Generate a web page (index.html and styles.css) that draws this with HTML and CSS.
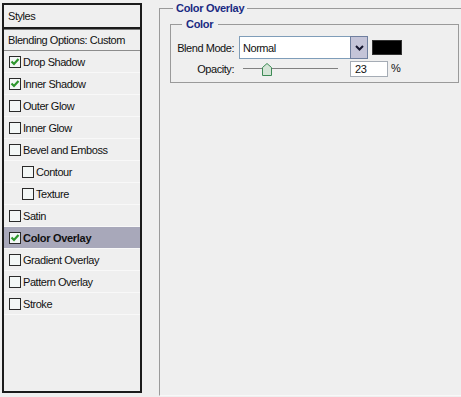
FILE: index.html
```html
<!DOCTYPE html>
<html lang="en">
<head>
    <meta charset="UTF-8">
    <title>Layer Style</title>
    <link rel="stylesheet" href="styles.css">
</head>
<body>

<div class="dialog">
    <!-- 左側樣式清單 -->
    <div class="style-list">
        <div class="list-head">Styles</div>
        <div class="list-blend">Blending Options: Custom</div>
        <div class="list-item"><span class="check"><svg width="10" height="10" viewBox="0 0 10 10"><path d="M1.5 4.5 L4 7 L8.5 2" fill="none" stroke="#2c962c" stroke-width="2.2"/></svg></span>Drop Shadow</div>
        <div class="list-item"><span class="check"><svg width="10" height="10" viewBox="0 0 10 10"><path d="M1.5 4.5 L4 7 L8.5 2" fill="none" stroke="#2c962c" stroke-width="2.2"/></svg></span>Inner Shadow</div>
        <div class="list-item"><span class="check"></span>Outer Glow</div>
        <div class="list-item"><span class="check"></span>Inner Glow</div>
        <div class="list-item"><span class="check"></span>Bevel and Emboss</div>
        <div class="list-item sub"><span class="check"></span>Contour</div>
        <div class="list-item sub"><span class="check"></span>Texture</div>
        <div class="list-item"><span class="check"></span>Satin</div>
        <div class="list-item active"><span class="check"><svg width="10" height="10" viewBox="0 0 10 10"><path d="M1.5 4.5 L4 7 L8.5 2" fill="none" stroke="#2c962c" stroke-width="2.2"/></svg></span>Color Overlay</div>
        <div class="list-item"><span class="check"></span>Gradient Overlay</div>
        <div class="list-item"><span class="check"></span>Pattern Overlay</div>
        <div class="list-item"><span class="check"></span>Stroke</div>
    </div>

    <!-- 右側設定 -->
    <fieldset class="group">
        <legend>Color Overlay</legend>
        <fieldset class="group-inner">
            <legend>Color</legend>
            <div class="field-row">
                <label class="field-label">Blend Mode:</label>
                <div class="select">
                    <span class="select-value">Normal</span>
                    <span class="select-btn"><svg width="9" height="6" viewBox="0 0 9 6"><path d="M1 1 L4.5 4.5 L8 1" fill="none" stroke="#15152e" stroke-width="2"/></svg></span>
                </div>
                <span class="swatch"></span>
            </div>
            <div class="field-row row-opacity">
                <label class="field-label">Opacity:</label>
                <div class="slider">
                    <div class="slider-track"></div>
                    <svg class="slider-thumb" style="left: 23%;" width="10" height="13" viewBox="0 0 10 13"><polygon points="5,0.5 9.5,4.5 9.5,12.5 0.5,12.5 0.5,4.5" fill="#d4e4d6" stroke="#3d8a55"/></svg>
                </div>
                <span class="num-input">23</span>
                <span class="unit">%</span>
            </div>
        </fieldset>
    </fieldset>
</div>

</body>
</html>
```

FILE: styles.css
```css
body {
    margin: 0;
    width: 461px;
    height: 397px;
    overflow: hidden;
    background-color: #efefef;
    font-family: "Liberation Sans", Arial, sans-serif;
    font-size: 11px;
    letter-spacing: -0.45px;
    color: #111;
}
.dialog {
    display: flex;
    align-items: flex-start;
    padding: 2px 0 0 2px;
    height: 397px;
    box-sizing: border-box;
}
.style-list {
    width: 140px;
    height: 390px;
    margin-top: 1px;
    box-sizing: border-box;
    border: 2px solid #1b1b1b;
    flex-shrink: 0;
}
.list-head {
    height: 22px;
    line-height: 22px;
    padding-left: 4px;
    border-bottom: 2px solid #1b1b1b;
}
.list-blend {
    height: 20px;
    line-height: 20px;
    padding-left: 4px;
    border-top: 1px solid #7c7c7c;
    border-bottom: 1px solid #8c8c8c;
}
.list-item {
    display: flex;
    align-items: center;
    height: 21px;
    padding-left: 5px;
    border-bottom: 1px solid #f8f8f8;
}
.list-item.sub {
    padding-left: 18px;
}
.list-item.active {
    background-color: #a8a8ba;
    font-weight: bold;
    letter-spacing: -0.3px;
}
.check {
    width: 12px;
    height: 12px;
    box-sizing: border-box;
    border: 1px solid #2a2a2a;
    background-color: #f3f7f6;
    margin-right: 2px;
    display: flex;
    align-items: center;
    justify-content: center;
    flex-shrink: 0;
}
.group {
    margin: 0 0 0 17px;
    padding: 0 0 0 10px;
    border: 1px solid #9a9a9a;
    border-right: none;
    border-bottom-color: #f8f8f8;
    box-sizing: border-box;
    height: 394px;
    flex: 1;
    min-width: 0;
}
.group legend,
.group-inner legend {
    font-weight: bold;
    color: #1a2a82;
    line-height: 13px;
    letter-spacing: -0.3px;
}
.group legend {
    margin-left: 3px;
    padding: 0 3px;
}
.group-inner {
    margin: 3px 0 0 0;
    padding: 0 0 5px 0;
    width: 289px;
    box-sizing: border-box;
    border: 1px solid #9a9a9a;
}
.group-inner legend {
    margin-left: 11px;
    padding: 0 5px 0 4px;
}
.field-row {
    display: flex;
    align-items: center;
    height: 23px;
    margin-top: 5px;
}
.field-row.row-opacity {
    height: 16px;
    margin-top: 2px;
}
.field-label {
    width: 63px;
    text-align: right;
    margin-right: 5px;
    flex-shrink: 0;
}
.select {
    display: flex;
    width: 129px;
    height: 23px;
}
.select-value {
    flex: 1;
    border: 1px solid #7f9db9;
    border-right: none;
    background-color: #fff;
    padding-left: 3px;
    line-height: 22px;
}
.select-btn {
    width: 18px;
    box-sizing: border-box;
    border: 1px solid #6f7f9f;
    background-color: #c4c4d8;
    display: flex;
    align-items: center;
    justify-content: center;
}
.swatch {
    width: 30px;
    height: 15px;
    box-sizing: border-box;
    background-color: #000;
    border: 1px solid #333;
    margin-left: 4px;
}
.slider {
    position: relative;
    width: 95px;
    height: 16px;
    margin-left: 4px;
}
.slider-track {
    margin-top: 7px;
    height: 1px;
    background-color: #808080;
}
.slider-thumb {
    position: absolute;
    top: 2px;
    margin-left: -3px;
}
.num-input {
    width: 38px;
    height: 16px;
    box-sizing: border-box;
    border: 1px solid #a5acb5;
    background-color: #fff;
    padding-left: 4px;
    line-height: 14px;
    margin-left: 12px;
}
.unit {
    margin-left: 3px;
    margin-top: -3px;
}
```
